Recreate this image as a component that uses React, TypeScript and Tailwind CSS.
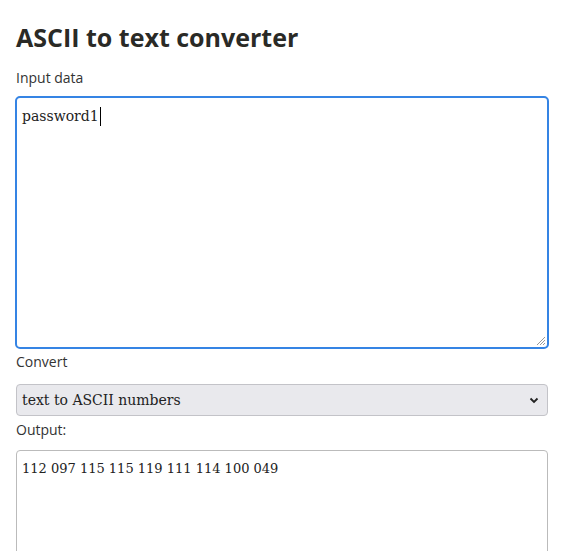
import React from "react";

export default function App() {
  return (
    <div className="w-[576px] h-[551px] overflow-hidden bg-white text-[#2b2b2b]" style={{ fontFamily: '"Open Sans", sans-serif' }}>
      <div className="pl-4 pr-[28px] pt-[19px]">
        <h1 className="text-[25px] font-bold leading-[36px] text-[#2a2a26]">ASCII to text converter</h1>
        <div className="mt-[13px] text-[14px] leading-[20px] text-[#333]">Input data</div>
        <div className="mt-[8px] -mx-px h-[253px] border-2 border-[#3584e4] rounded-[5px] relative px-[5px] pt-[8px]">
          <div className="text-[14px] leading-[20px] text-[#222] flex items-center" style={{ fontFamily: '"DejaVu Serif", serif' }}>
            password1<span className="inline-block w-px h-[19px] bg-black ml-px" />
          </div>
          <svg className="absolute right-[1px] bottom-[1px]" width="10" height="10" viewBox="0 0 10 10">
            <line x1="9" y1="1" x2="1" y2="9" stroke="#999" strokeWidth="1" />
            <line x1="9" y1="4" x2="4" y2="9" stroke="#999" strokeWidth="1" />
            <line x1="9" y1="7" x2="7" y2="9" stroke="#999" strokeWidth="1" />
          </svg>
        </div>
        <div className="mt-[3px] text-[14px] leading-[20px] text-[#333]">Convert</div>
        <div className="mt-[12px] h-[32px] border border-[#c3c3c8] bg-[#e9e9ed] rounded-[4px] flex items-center justify-between pl-[5px] pr-[8px]">
          <span className="text-[14px] text-[#222]" style={{ fontFamily: '"DejaVu Serif", serif' }}>text to ASCII numbers</span>
          <svg width="10" height="7" viewBox="0 0 10 7">
            <path d="M1.5 1.5 L5 5 L8.5 1.5" stroke="#222" strokeWidth="1.8" fill="none" />
          </svg>
        </div>
        <div className="mt-[4px] text-[14px] leading-[20px] text-[#333]">Output:</div>
        <div className="mt-[10px] h-[200px] border border-[#bbb] rounded-[4px] px-[5px] pt-[8px]">
          <div className="text-[13px] leading-[20px] text-[#222]" style={{ fontFamily: '"DejaVu Serif", serif' }}>112 097 115 115 119 111 114 100 049</div>
        </div>
      </div>
    </div>
  );
}
